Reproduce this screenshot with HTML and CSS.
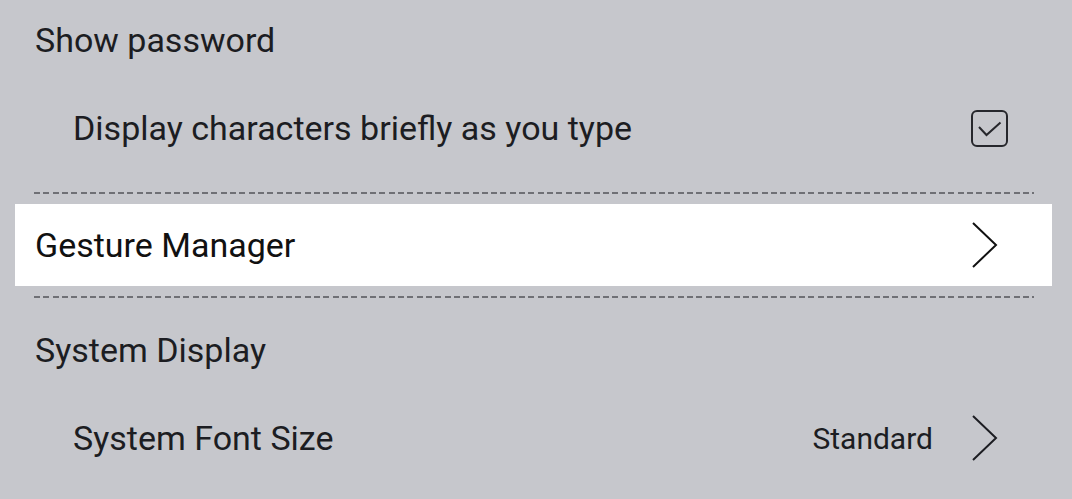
FILE: index.html
```html
<!DOCTYPE html>
<html>
<head>
<meta charset="utf-8">
<link rel="stylesheet" href="styles.css">
</head>
<body>
<div class="list">
  <div class="header">Show password</div>
  <div class="sub">
    <span class="label">Display characters briefly as you type</span>
    <span class="checkbox">
      <svg width="37" height="37" viewBox="0 0 37 37"><rect x="1" y="1" width="35" height="35" rx="5" ry="5" fill="none" stroke="#26272c" stroke-width="2"/><path d="M8 17 L15.5 25 L29.5 12.5" fill="none" stroke="#26272c" stroke-width="2"/></svg>
    </span>
  </div>
  <div class="divider"></div>
  <div class="highlight">
    <span class="label">Gesture Manager</span>
    <svg class="chev" width="26" height="46" viewBox="0 0 26 46"><path d="M1 1 L24 23 L1 45" fill="none" stroke="#111" stroke-width="2"/></svg>
  </div>
  <div class="divider"></div>
  <div class="header second">System Display</div>
  <div class="sub">
    <span class="label">System Font Size</span>
    <span class="value">Standard</span>
    <svg class="chev" width="26" height="46" viewBox="0 0 26 46"><path d="M1 1 L24 23 L1 45" fill="none" stroke="#1c1d22" stroke-width="2"/></svg>
  </div>
</div>
</body>
</html>
```

FILE: styles.css
```css
html, body {
  margin: 0;
  padding: 0;
  background: #c6c7cc;
}
body {
  font-family: Roboto, "Noto Sans", sans-serif;
  color: #1c1d22;
  width: 1072px;
  height: 499px;
  overflow: hidden;
}
.list {
  display: flex;
  flex-direction: column;
}
.header {
  height: 80px;
  display: flex;
  align-items: center;
  padding-left: 35px;
  font-size: 34px;
}
.header.second {
  margin-top: 2px;
}
.sub {
  height: 96px;
  display: flex;
  align-items: center;
  padding-left: 73px;
  padding-right: 74px;
  font-size: 34px;
}
.sub .label {
  flex: 1;
}
.checkbox {
  display: flex;
  margin-right: -10px;
}
.value {
  font-size: 30px;
  margin-right: 39px;
}
.divider {
  height: 2px;
  margin: 16px 38px 10px 34px;
  background: repeating-linear-gradient(to right, #6f7075 0 6px, transparent 6px 9.33px);
}
.highlight + .divider {
  margin-top: 10px;
}
.highlight {
  height: 82px;
  margin: 0 20px 0 15px;
  background: #ffffff;
  display: flex;
  align-items: center;
  padding-left: 20px;
  padding-right: 54px;
  font-size: 34px;
  color: #111;
}
.highlight .label {
  flex: 1;
}
.chev {
  display: block;
}
```
